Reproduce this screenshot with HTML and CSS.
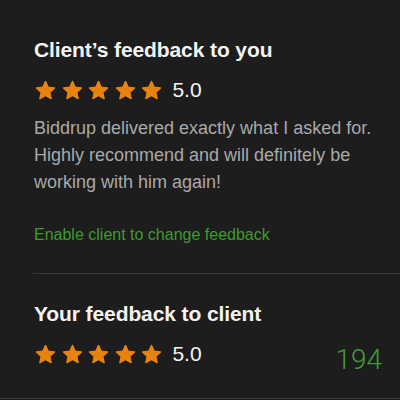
FILE: index.html
```html
<!DOCTYPE html>
<html lang="en">
<head>
    <meta charset="UTF-8">
    <meta name="viewport" content="width=device-width, initial-scale=1.0">
    <title>Feedback</title>
    <link rel="stylesheet" href="styles.css">
</head>
<body>
    <div class="feedback">
        <section class="block">
            <h2>Client’s feedback to you</h2>
            <div class="rating">
                <div class="stars">
                    <svg viewBox="0 0 24 24"><path d="M12 2.6l2.8 6.1 6.6.7-5 4.5 1.4 6.5L12 17.1l-5.8 3.3 1.4-6.5-5-4.5 6.6-.7z"/></svg>
                    <svg viewBox="0 0 24 24"><path d="M12 2.6l2.8 6.1 6.6.7-5 4.5 1.4 6.5L12 17.1l-5.8 3.3 1.4-6.5-5-4.5 6.6-.7z"/></svg>
                    <svg viewBox="0 0 24 24"><path d="M12 2.6l2.8 6.1 6.6.7-5 4.5 1.4 6.5L12 17.1l-5.8 3.3 1.4-6.5-5-4.5 6.6-.7z"/></svg>
                    <svg viewBox="0 0 24 24"><path d="M12 2.6l2.8 6.1 6.6.7-5 4.5 1.4 6.5L12 17.1l-5.8 3.3 1.4-6.5-5-4.5 6.6-.7z"/></svg>
                    <svg viewBox="0 0 24 24"><path d="M12 2.6l2.8 6.1 6.6.7-5 4.5 1.4 6.5L12 17.1l-5.8 3.3 1.4-6.5-5-4.5 6.6-.7z"/></svg>
                </div>
                <span class="score">5.0</span>
            </div>
            <p class="comment">Biddrup delivered exactly what I asked for. Highly recommend and will definitely be working with him again!</p>
            <a class="enable" href="#">Enable client to change feedback</a>
        </section>

        <section class="block second">
            <h2>Your feedback to client</h2>
            <div class="rating">
                <div class="stars">
                    <svg viewBox="0 0 24 24"><path d="M12 2.6l2.8 6.1 6.6.7-5 4.5 1.4 6.5L12 17.1l-5.8 3.3 1.4-6.5-5-4.5 6.6-.7z"/></svg>
                    <svg viewBox="0 0 24 24"><path d="M12 2.6l2.8 6.1 6.6.7-5 4.5 1.4 6.5L12 17.1l-5.8 3.3 1.4-6.5-5-4.5 6.6-.7z"/></svg>
                    <svg viewBox="0 0 24 24"><path d="M12 2.6l2.8 6.1 6.6.7-5 4.5 1.4 6.5L12 17.1l-5.8 3.3 1.4-6.5-5-4.5 6.6-.7z"/></svg>
                    <svg viewBox="0 0 24 24"><path d="M12 2.6l2.8 6.1 6.6.7-5 4.5 1.4 6.5L12 17.1l-5.8 3.3 1.4-6.5-5-4.5 6.6-.7z"/></svg>
                    <svg viewBox="0 0 24 24"><path d="M12 2.6l2.8 6.1 6.6.7-5 4.5 1.4 6.5L12 17.1l-5.8 3.3 1.4-6.5-5-4.5 6.6-.7z"/></svg>
                </div>
                <span class="score">5.0</span>
                <span class="count">194</span>
            </div>
        </section>
    </div>
</body>
</html>
```

FILE: styles.css
```css
html, body {
    margin: 0;
    height: 100%;
    background-color: #1d1d1d;
}
body {
    font-family: "Liberation Sans", Arial, sans-serif;
    color: #f4f4f4;
}
.feedback {
    height: 399px;
    border-bottom: 1px solid #3a3a3a;
    box-sizing: border-box;
}
.block {
    margin-left: 33px;
    padding: 36px 18px 0 1px;
}
.block.second {
    border-top: 1px solid #383838;
    padding-top: 26px;
}
h2 {
    margin: 0;
    font-size: 21px;
    line-height: 28px;
    font-weight: bold;
    letter-spacing: -0.1px;
}
.rating {
    display: flex;
    align-items: center;
    margin-top: 14px;
    height: 24px;
}
.stars {
    display: flex;
    gap: 3.6px;
}
.stars svg {
    width: 23px;
    height: 23px;
    fill: #e8830f;
    stroke: #e8830f;
    stroke-width: 1.6;
    stroke-linejoin: round;
}
.score {
    margin-left: 9px;
    font-size: 21px;
}
.count {
    margin-left: auto;
    font-family: Roboto, sans-serif;
    font-weight: 300;
    font-size: 28px;
    color: #3f9d3a;
    position: relative;
    top: 5px;
}
.comment {
    margin: 13px 0 0;
    font-size: 18px;
    line-height: 27px;
    color: #a9a9a9;
}
.enable {
    display: block;
    margin: 29px 0 28px;
    font-size: 16px;
    line-height: 20px;
    color: #3e9b2f;
    text-decoration: none;
}
```
